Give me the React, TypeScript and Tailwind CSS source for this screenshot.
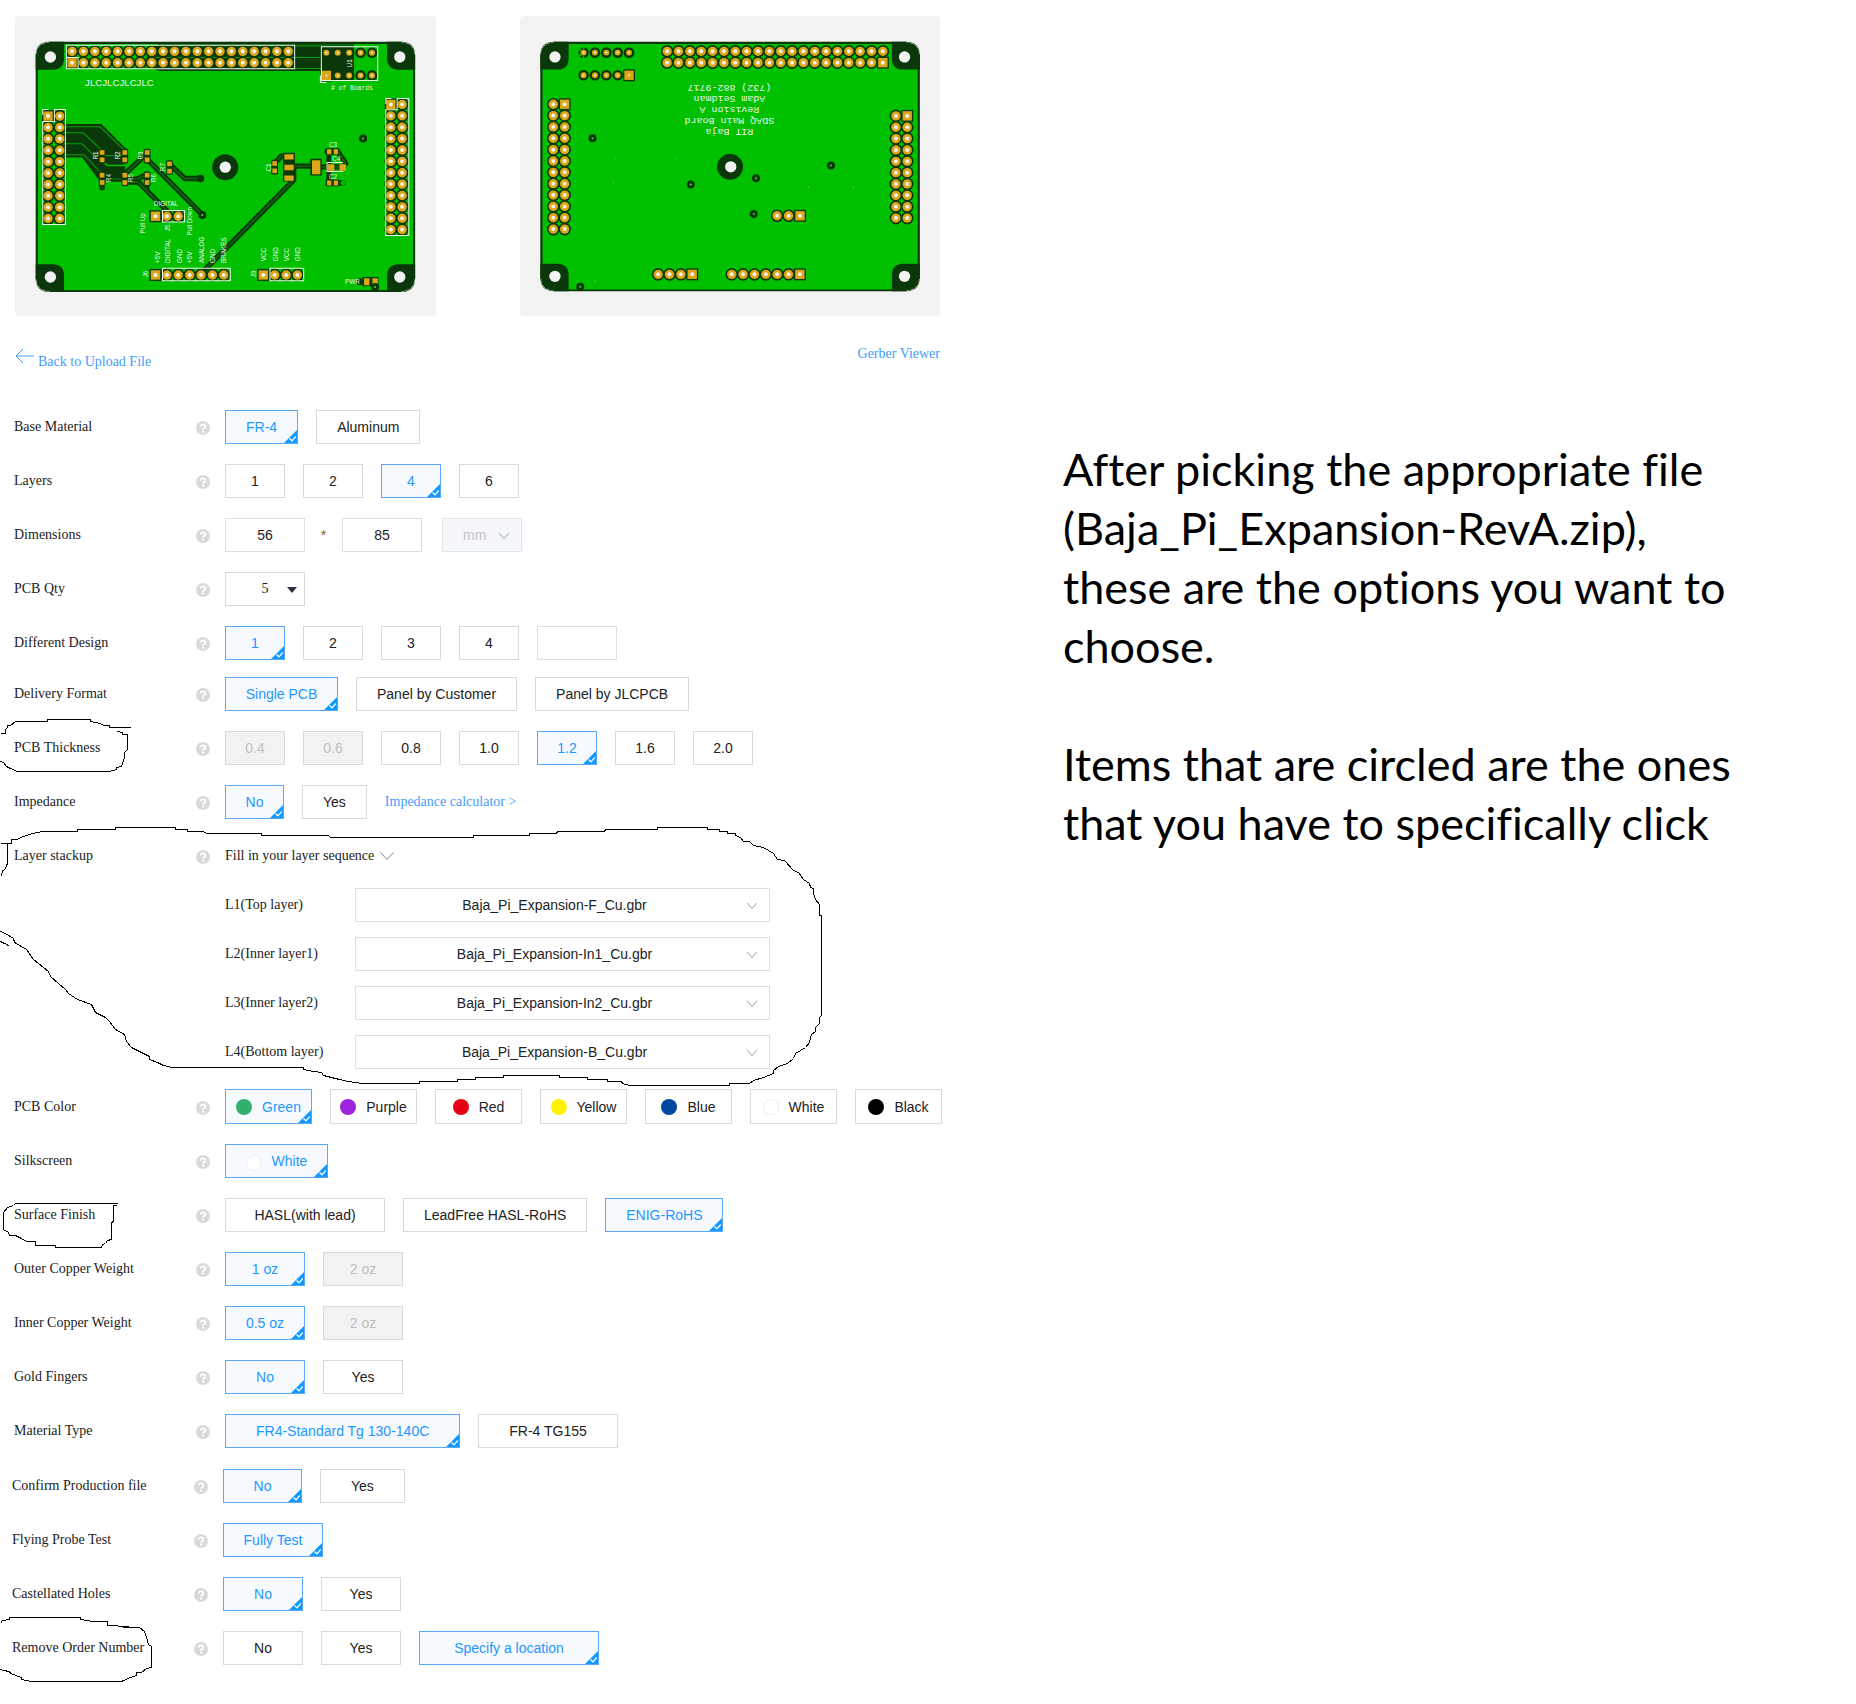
import React from "react";

const DARK = "#0b380b";
const GREEN = "#00c000";
const GOLD = "#dba617";
const HOLE = "#f2f2f2";
const SILK = "#e9f5e9";

type Point = [number, number];

const grid = (x: number, y: number, cols: number, rows: number, dx = 34.1, dy = 34.1): Point[] => {
  const points: Point[] = [];
  for (let r = 0; r < rows; r++) {
    for (let c = 0; c < cols; c++) points.push([x + c * dx, y + r * dy]);
  }
  return points;
};

function Pins({ points, square = -1, small = false }: { points: Point[]; square?: number; small?: boolean }) {
  const outer = small ? 16 : 19;
  const ring = small ? 9 : 14;
  const hole = small ? 3 : 6;
  return (
    <g>
      {points.map(([x, y], i) =>
        i === square ? (
          <rect key={i} x={x - 18} y={y - 18} width={36} height={36} fill={DARK} />
        ) : (
          <circle key={i} cx={x} cy={y} r={outer} fill={DARK} />
        ),
      )}
      {points.map(([x, y], i) => (
        <g key={i}>
          {i === square ? (
            <rect x={x - 14} y={y - 14} width={28} height={28} fill={GOLD} />
          ) : (
            <circle cx={x} cy={y} r={ring} fill={GOLD} />
          )}
          <circle cx={x} cy={y} r={hole} fill={HOLE} />
        </g>
      ))}
    </g>
  );
}

function BoardBody({ x, right }: { x: number; right: number }) {
  const w = right - x;
  return (
    <g>
      <rect x={x} y={125} width={w} height={750} rx={42} fill={DARK} />
      <rect x={x + 6} y={132} width={w - 12} height={738} fill={GREEN} clipPath="inset(0 round 42px)" />
      <path d={`M${x} 209V167q0-42 42-42h43v49q0 35-35 35z`} fill={DARK} />
      <path d={`M${right} 209V167q0-42-42-42h-42v49q0 35 35 35z`} fill={DARK} />
      <path d={`M${x} 792v41q0 42 42 42h43v-48q0-35-35-35z`} fill={DARK} />
      <path d={`M${right} 792v41q0 42-42 42h-42v-48q0-35 35-35z`} fill={DARK} />
      <g fill="none" stroke="#dfe8df" strokeWidth={2} strokeDasharray="14 3">
        <path d={`M${x + 1} 162q2-32 40-36`} />
        <path d={`M${right - 1} 162q-2-32-40-36`} />
        <path d={`M${x + 1} 838q2 32 40 36`} />
        <path d={`M${right - 1} 838q-2 32-40 36`} />
      </g>
      <g fill={HOLE}>
        <circle cx={x + 44} cy={171} r={17} />
        <circle cx={right - 46} cy={171} r={17} />
        <circle cx={x + 44} cy={830} r={17} />
        <circle cx={right - 46} cy={830} r={17} />
      </g>
    </g>
  );
}

function Via({ x, y }: { x: number; y: number }) {
  return (
    <g>
      <circle cx={x} cy={y} r={12} fill={DARK} />
      <circle cx={x} cy={y} r={3} fill="#4fd44f" />
    </g>
  );
}

function Smd({ x, y }: { x: number; y: number }) {
  return (
    <g>
      <rect x={x - 10} y={y - 22} width={20} height={44} rx={4} fill={DARK} />
      <rect x={x - 7} y={y - 18} width={14} height={14} fill={GOLD} />
      <rect x={x - 7} y={y + 4} width={14} height={14} fill={GOLD} />
    </g>
  );
}

function Trace({ d }: { d: string }) {
  return (
    <g fill="none" strokeLinejoin="round" strokeLinecap="round">
      <path d={d} stroke={DARK} strokeWidth={16} />
      <path d={d} stroke="#087008" strokeWidth={4} />
    </g>
  );
}

function Upright({ x, y, size = 19, children }: { x: number; y: number; size?: number; children: string }) {
  return (
    <text transform={`translate(${x} ${y}) rotate(-90)`} fontSize={size}>
      {children}
    </text>
  );
}

function TopBoard() {
  return (
    <svg viewBox="45 48 1260 900" className="block h-auto w-full" role="img" aria-label="Top side of the board">
      <BoardBody x={107} right={1244} />
      <path d="M476 133H1060V213H480L440 200V150z" fill={DARK} />
      <path d="M440 189l10-17H960M480 205H992l20 20M480 138H1052l14 14v60l14 12" fill="none" stroke="#0aa00a" strokeWidth={3} />
      <path d="M190 372H304L378 446V530L300 545L246 472H190z" fill={DARK} />
      <path
        d="M190 380H300L372 450M160 380l20 18H250L304 450M160 415l18 16H246L282 466H372M182 464H252L304 520M326 496h50v24"
        fill="none"
        stroke="#0aa00a"
        strokeWidth={3}
      />
      <path d="M304 480l18 16h52v-20" fill="none" stroke={GREEN} strokeWidth={5} />
      <Trace d="M306 525v38" />
      <Trace d="M440 525v38" />
      <Trace d="M306 537H410L436 525" />
      <Trace d="M376 520L436 464" />
      <Trace d="M440 476L606 643" />
      <Trace d="M376 546H415L500 632V648" />
      <Trace d="M508 492L554 535H601" />
      <Trace d="M614 808L880 540V498H940" />
      <Trace d="M823 490L842 468H866" />
      <Trace d="M980 454H1012L1036 490" />
      <Trace d="M988 548H1028" />
      <Trace d="M940 500H1030" />
      <Trace d="M1124 846v18" />
      <path d="M985 454v90" stroke={DARK} strokeWidth={14} />

      <Pins points={grid(216, 154, 20, 2)} square={20} />
      <Pins points={grid(144, 348, 2, 10, 35)} square={0} />
      <Pins points={grid(1171, 313, 2, 12)} square={0} />
      <Pins points={grid(466, 824, 7, 1)} square={0} />
      <Pins points={grid(789, 824, 4, 1)} square={0} />
      <Pins points={grid(466, 648, 3, 1)} square={0} />
      <path d="M965 142H1060V240H965z" fill={DARK} />
      <Pins points={grid(978, 158, 5, 1, 34.2)} small />
      <Pins points={grid(978, 226, 5, 1, 34.2)} square={0} small />

      {([[306, 468], [374, 468], [441, 468], [306, 536], [374, 536], [441, 536], [508, 502], [823, 501]] as Point[]).map(
        ([x, y]) => (
          <Smd key={`${x}-${y}`} x={x} y={y} />
        ),
      )}
      <path d="M848 458h36v86h-36z" fill={DARK} />
      <g fill={GOLD}>
        <path d="M852 462h28v16h-28zM852 494h28v16h-28zM852 526h28v16h-28z" />
      </g>
      <path d="M930 476h34v50h-34z" fill={DARK} />
      <path d="M935 480h25v42h-25zM982 492h20v20h-20zM1017 492h20v20h-20z" fill={GOLD} />
      <path d="M976 444h40v20h-40zM976 538h40v20h-40z" fill={DARK} />
      <path d="M980 447h13v15h-13zM1000 447h13v15h-13zM980 541h13v15h-13zM1000 541h13v15h-13z" fill={GOLD} />
      <circle cx={1078} cy={844} r={10} fill={DARK} />
      <path d="M1086 830h48v28h-48z" fill={DARK} />
      <path d="M1091 834h16v21h-16zM1116 834h16v21h-16z" fill={GOLD} />

      <circle cx={675} cy={501} r={39} fill={DARK} />
      <circle cx={675} cy={501} r={17} fill={HOLE} />
      <Via x={1088} y={415} />
      <Via x={606} y={644} />
      <circle cx={601} cy={535} r={11} fill={DARK} />
      <circle cx={1028} cy={548} r={7} fill={GREEN} />
      <Via x={1124} y={860} />

      <g fill="none" stroke={SILK} strokeWidth={3}>
        <path d="M199 136H883V206H234V172H199zM199 172V206H234" />
        <path d="M163 328H196V673H128V364H163zM128 345V328H145M128 364H163" />
        <path d="M1190 295H1225V706H1156V329H1190zM1156 312V295H1173" />
        <path d="M963 140H1132V241H963zM960 226V247H978" />
        <path d="M487 804H690V841H487z" />
        <path d="M809 804H910V841H809z" />
        <path d="M487 631H553V665H487z" />
        <path d="M1028 487H980V514H1028" />
      </g>
      <g fill={SILK} className="font-['Liberation_Sans']">
        <text x={255} y={258} fontSize={29}>JLCJLCJLCJLC</text>
        <text x={992} y={269} fontSize={19} className="font-['Liberation_Mono']"># of Boards</text>
        <text x={461} y={616} fontSize={19}>DIGITAL</text>
        <text x={986} y={440} fontSize={19}>C3</text>
        <text x={996} y={483} fontSize={19}>C4</text>
        <text x={986} y={535} fontSize={19}>C2</text>
        <text x={1034} y={851} fontSize={19}>PWR</text>
        <Upright x={1054} y={202}>U1</Upright>
        <Upright x={294} y={478}>R1</Upright>
        <Upright x={361} y={478}>R2</Upright>
        <Upright x={430} y={478}>R3</Upright>
        <Upright x={332} y={546}>R4</Upright>
        <Upright x={400} y={546}>R5</Upright>
        <Upright x={467} y={546}>R6</Upright>
        <Upright x={495} y={513}>R7</Upright>
        <Upright x={811} y={514}>C1</Upright>
        <Upright x={434} y={700}>Pull Up</Upright>
        <Upright x={576} y={706}>Pull Down</Upright>
        <Upright x={508} y={693}>J5</Upright>
        <Upright x={445} y={831}>J6</Upright>
        <Upright x={766} y={831}>J3</Upright>
        <Upright x={478} y={788}>+5V</Upright>
        <Upright x={509} y={788}>DIGITAL</Upright>
        <Upright x={545} y={788}>GND</Upright>
        <Upright x={576} y={788}>+5V</Upright>
        <Upright x={610} y={788}>ANALOG</Upright>
        <Upright x={644} y={788}>GND</Upright>
        <Upright x={678} y={788}>BRAKES</Upright>
        <Upright x={798} y={783}>VCC</Upright>
        <Upright x={832} y={783}>GND</Upright>
        <Upright x={866} y={783}>VCC</Upright>
        <Upright x={900} y={783}>GND</Upright>
      </g>
    </svg>
  );
}

const BOTTOM_TEXT: [string, number][] = [
  ["(732) 882-9717", 255],
  ["Adam Seidman", 288],
  ["Revision A", 321],
  ["SDAQ Main Board", 354],
  ["RIT Baja", 387],
];

function BottomBoard() {
  return (
    <svg viewBox="57 48 1263 900" className="block h-auto w-full" role="img" aria-label="Bottom side of the board">
      <BoardBody x={118} right={1258} />
      <Pins points={grid(499, 154, 20, 2)} square={39} />
      <Pins points={grid(248, 158, 5, 1)} small />
      <path d="M232 148l10 4M232 168l10-4M248 140v8M248 168v8" stroke={GREEN} strokeWidth={5} />
      <Pins points={grid(248, 226, 5, 1)} square={4} small />
      <Pins points={grid(157, 313, 2, 12)} square={1} />
      <Pins points={grid(1186, 348, 2, 10)} square={1} />
      <Pins points={grid(829, 648, 3, 1, 34.6)} square={2} />
      <Pins points={grid(472, 824, 4, 1)} square={3} />
      <Pins points={grid(693, 824, 7, 1)} square={6} />
      <circle cx={688} cy={501} r={39} fill={DARK} />
      <circle cx={690} cy={501} r={17} fill={HOLE} />
      {([[275, 415], [991, 497], [766, 535], [570, 554], [759, 643], [238, 861]] as Point[]).map(([x, y]) => (
        <Via key={x} x={x} y={y} />
      ))}
      <path
        d="M343 476h3M523 475h3M336 547h3M922 562h3M1057 562h3M280 844h3"
        stroke="#8fdc8f"
        strokeWidth={3}
      />
      <g fill={SILK} fontSize={30} className="font-['Liberation_Mono']">
        {BOTTOM_TEXT.map(([line, y]) => (
          <text key={line} transform={`translate(686 ${y}) rotate(180)`} textAnchor="middle">
            {line}
          </text>
        ))}
      </g>
    </svg>
  );
}

function HelpIcon() {
  return (
    <svg viewBox="0 0 14 14" className="mt-0.5 mr-[15px] size-3.5 shrink-0" aria-hidden="true">
      <circle cx="7" cy="7" r="7" fill="#d9d9d9" />
      <path d="M4.700 5.600C4.700 4.200 5.600 3.300 7 3.300s2.300.8 2.300 2.100c0 1.500-2.200 1.600-2.200 3.300" fill="none" stroke="#fff" strokeWidth="1.800" />
      <circle cx="7.100" cy="10.700" r="1.100" fill="#fff" />
    </svg>
  );
}

function Corner() {
  return (
    <svg viewBox="0 0 13 13" className="absolute right-0 bottom-0 size-[13px]" aria-hidden="true">
      <path d="M13 0v13H0z" fill="#1199ff" />
      <path d="M5.500 8.500l2.500 2.300 3.700-4.300" fill="none" stroke="#fff" strokeWidth="1.200" />
    </svg>
  );
}

type OptionProps = {
  children: React.ReactNode;
  on?: boolean;
  off?: boolean;
  className?: string;
};

function Option({ children, on, off, className = "px-5" }: OptionProps) {
  const tone = on
    ? "border-[#58aaf8] bg-[#f6faff] text-[#1e98ff]"
    : off
      ? "border-[#d9d9d9] bg-[#f2f2f2] text-[#bfbfbf]"
      : "border-[#d9d9d9] bg-white text-[#222]";
  return (
    <button
      type="button"
      aria-pressed={!!on}
      disabled={off}
      className={`relative flex h-full shrink-0 items-center justify-center border whitespace-nowrap ${tone} ${className}`}
    >
      {children}
      {on && <Corner />}
    </button>
  );
}

function Row({
  label,
  children,
  className = "mb-5 h-[34px]",
  gap = "gap-[18px]",
}: {
  label: string;
  children: React.ReactNode;
  className?: string;
  gap?: string;
}) {
  return (
    <div role="group" aria-label={label} className={`flex items-center ${className}`}>
      <span className="w-[182px] shrink-0 font-['Liberation_Serif']">{label}</span>
      <HelpIcon />
      <div className={`flex h-full items-center ${gap}`}>{children}</div>
    </div>
  );
}

function Chevron({ className }: { className: string }) {
  return (
    <svg viewBox="0 0 12 8" className={className} fill="none" stroke="currentColor" aria-hidden="true">
      <path d="M1 1l5 5.500L11 1" strokeWidth="1.200" />
    </svg>
  );
}

function Dot({ className }: { className: string }) {
  return <span className={`mr-2.5 size-4 shrink-0 rounded-full ${className}`} />;
}

const NUM = "w-[60px]";
const MID = "w-20";
const COLOR = "w-[87px]";

const LAYERS = [
  ["L1(Top layer)", "Baja_Pi_Expansion-F_Cu.gbr"],
  ["L2(Inner layer1)", "Baja_Pi_Expansion-In1_Cu.gbr"],
  ["L3(Inner layer2)", "Baja_Pi_Expansion-In2_Cu.gbr"],
  ["L4(Bottom layer)", "Baja_Pi_Expansion-B_Cu.gbr"],
];

const COLORS = [
  ["Green", "bg-[#33b06c]"],
  ["Purple", "bg-[#9c24dc]"],
  ["Red", "bg-[#e60012]"],
  ["Yellow", "bg-[#fff100]"],
  ["Blue", "bg-[#00479d]"],
  ["White", "border border-[#eee] bg-white"],
  ["Black", "bg-black"],
];

const FIELD = "h-full w-20 border border-[#dcdfe6] bg-white text-center text-[#222]";

const PEN_STROKES = [
  "0,733 5,733 5,729 7,727 7,725 10,725 15,721 47,721 47,719 90,719 90,721 100,723 103,725 109,725 109,727 130,727",
  "117,731 122,732 122,734 127,734 127,749 124,752 124,757 122,763 121,766 116,767 116,769 109,771 17,771 10,768 6,766 3,762 0,761",
  "0,843 11,843 11,839 17,839 20,837 26,835 32,833 42,831 77,831 77,829 115,829 115,827 175,827 175,829 187,829 187,831 203,831 206,833 261,833 261,835 328,835 330,837 473,837 473,835 529,835 529,833 556,833 557,831 604,831 605,829 657,829 657,827 707,827 707,829 719,829 719,831 727,831 727,833 735,833 735,835 740,837 743,841 749,841 753,845 763,847 773,853 777,859 784,860 793,870 798,872 803,879 809,883 810,887 813,888 813,893 815,899 819,904 819,915 821,915 821,1015 819,1017 819,1023 815,1027 815,1031 811,1034 809,1042 805,1047 795,1053 793,1058 787,1063 778,1066 773,1070 773,1073 763,1077 753,1080 749,1083 729,1083 729,1085 629,1085 622,1083 621,1081 607,1081 607,1079 587,1079 587,1077 559,1077 559,1075 503,1075 503,1077 475,1077 475,1079 457,1079 457,1081 419,1081 419,1083 362,1083 348,1081 339,1079 331,1077 323,1075 321,1072 313,1071 303,1069 303,1067 172,1067 163,1065 157,1062 149,1059 149,1056 141,1052 131,1047 126,1041 124,1034 115,1029 109,1021 105,1017 95,1012 91,1004 77,999 68,993 65,989 50,976 48,971 33,959 26,949 14,942 13,938 5,933 0,931",
  "0,941 4,943 7,944 8,946",
  "7,843 7,863 6,865 5,869 2,870 1,875 0,876",
  "117,1203 15,1203 13,1205 7,1207 3,1212 3,1229 8,1232 9,1235 15,1235 21,1238 26,1241 35,1241 35,1245 55,1245 55,1247 101,1247 102,1244 105,1243 107,1240 111,1239 111,1222 113,1221 113,1205 116,1205",
  "0,1623 2,1620 9,1619 9,1617 80,1617 80,1619 93,1621 107,1621 107,1625 128,1626 123,1627 139,1627 144,1631 146,1637 148,1644 151,1646 151,1667 146,1668 141,1672 136,1672 136,1675 130,1677 121,1681 31,1681 21,1679 21,1677 10,1673 9,1671 3,1670 0,1669",
];

export default function App() {
  return (
    <main className="flex bg-white font-['Liberation_Sans',sans-serif] text-sm text-[#222]">
      <section className="relative basis-[942px]">
        <div className="flex gap-[84px] pt-4 pr-0.5 pl-[15px]">
          <div className="flex-1 overflow-hidden rounded bg-[#f2f2f2]">
            <TopBoard />
          </div>
          <div className="flex-1 overflow-hidden rounded bg-[#f2f2f2]">
            <BottomBoard />
          </div>
        </div>

        <nav className="mt-[29px] mb-[31px] flex items-start justify-between pr-0.5 pl-[15px] font-['Liberation_Serif'] text-[#409eff]">
          <a href="#upload" className="flex items-end gap-1">
            <svg viewBox="0 0 19 34" className="h-[34px] w-[19px]" fill="none" stroke="currentColor" aria-hidden="true">
              <path d="M8 4L1 11l7 7M1 11h18" />
            </svg>
            <span className="leading-[34px]">Back to Upload File</span>
          </a>
          <a href="#viewer" className="leading-[18px]">Gerber Viewer</a>
        </nav>

        <form className="pl-3.5">
          <Row label="Base Material">
            <Option on>FR-4</Option>
            <Option>Aluminum</Option>
          </Row>
          <Row label="Layers">
            <Option className={NUM}>1</Option>
            <Option className={NUM}>2</Option>
            <Option className={NUM} on>4</Option>
            <Option className={NUM}>6</Option>
          </Row>
          <Row label="Dimensions" gap="gap-0">
            <input aria-label="Width" defaultValue="56" className={FIELD} />
            <span className="w-[37px] text-center text-[#8a5a2b]">*</span>
            <input aria-label="Height" defaultValue="85" className={FIELD} />
            <span className="relative ml-5 h-full text-[#c0c4cc]">
              <select
                aria-label="Unit"
                disabled
                className="h-full w-20 appearance-none border border-[#e4e7ed] bg-[#f5f7fa] pl-5 opacity-100"
              >
                <option>mm</option>
              </select>
              <Chevron className="absolute top-[14px] right-3 h-2 w-3" />
            </span>
          </Row>
          <Row label="PCB Qty">
            <span className="relative h-full">
              <select
                aria-label="PCB Qty"
                className="h-full w-20 appearance-none border border-[#d9d9d9] bg-white text-center font-['Liberation_Serif'] text-[#222]"
              >
                <option>5</option>
              </select>
              <svg viewBox="0 0 10 6" className="pointer-events-none absolute top-[15px] right-2 h-1.5 w-2.5" aria-hidden="true">
                <path d="M0 0h10L5 6z" fill="#2c2f45" />
              </svg>
            </span>
          </Row>
          <Row label="Different Design" className="mb-[17px] h-[34px]">
            <Option className={NUM} on>1</Option>
            <Option className={NUM}>2</Option>
            <Option className={NUM}>3</Option>
            <Option className={NUM}>4</Option>
            <input aria-label="Other number of designs" className={FIELD} />
          </Row>
          <Row label="Delivery Format">
            <Option className="w-[113px]" on>Single PCB</Option>
            <Option>Panel by Customer</Option>
            <Option>Panel by JLCPCB</Option>
          </Row>
          <Row label="PCB Thickness">
            <Option className={NUM} off>0.4</Option>
            <Option className={NUM} off>0.6</Option>
            <Option className={NUM}>0.8</Option>
            <Option className={NUM}>1.0</Option>
            <Option className={NUM} on>1.2</Option>
            <Option className={NUM}>1.6</Option>
            <Option className={NUM}>2.0</Option>
          </Row>
          <Row label="Impedance">
            <Option className="w-[59px]" on>No</Option>
            <Option>Yes</Option>
            <a href="#impedance" className="font-['Liberation_Serif'] text-[#409eff]">Impedance calculator &gt;</a>
          </Row>
          <Row label="Layer stackup" className="mb-[15px] h-[34px]">
            <button type="button" className="flex items-center gap-1.5 font-['Liberation_Serif']">
              Fill in your layer sequence
              <svg viewBox="0 0 14 8" className="h-2 w-3.5" fill="none" stroke="#707680" aria-hidden="true">
                <path d="M.5.5L7 7.500L13.500.5" strokeWidth=".9" />
              </svg>
            </button>
          </Row>
          <div className="mb-5 ml-[211px] flex flex-col gap-[15px]">
            {LAYERS.map(([name, file]) => (
              <label key={name} className="flex h-[34px] items-center">
                <span className="w-[130px] font-['Liberation_Serif']">{name}</span>
                <span className="relative h-full w-[415px]">
                  <select className="h-full w-full appearance-none border border-[#dcdfe6] bg-white pr-4 text-center text-[#222]">
                    <option>{file}</option>
                  </select>
                  <Chevron className="pointer-events-none absolute top-[14px] right-3 h-2 w-3 text-[#c0c4cc]" />
                </span>
              </label>
            ))}
          </div>
          <Row label="PCB Color" className="mb-5 h-[35px]">
            {COLORS.map(([name, dot], i) => (
              <Option key={name} className={COLOR} on={i === 0}>
                <Dot className={dot} />
                {name}
              </Option>
            ))}
          </Row>
          <Row label="Silkscreen">
            <Option className="w-[103px]" on>
              <Dot className="mt-1 border border-[#eee] bg-white" />
              White
            </Option>
          </Row>
          <Row label="Surface Finish">
            <Option className="w-40">HASL(with lead)</Option>
            <Option>LeadFree HASL-RoHS</Option>
            <Option className="w-[118px]" on>ENIG-RoHS</Option>
          </Row>
          <Row label="Outer Copper Weight">
            <Option className={MID} on>1 oz</Option>
            <Option className={MID} off>2 oz</Option>
          </Row>
          <Row label="Inner Copper Weight">
            <Option className={MID} on>0.5 oz</Option>
            <Option className={MID} off>2 oz</Option>
          </Row>
          <Row label="Gold Fingers">
            <Option className={MID} on>No</Option>
            <Option className={MID}>Yes</Option>
          </Row>
          <Row label="Material Type" className="mb-[21px] h-[34px]">
            <Option className="px-[30px]" on>FR4-Standard Tg 130-140C</Option>
            <Option className="px-[30px]">FR-4 TG155</Option>
          </Row>
          <div className="-ml-0.5">
            <Row label="Confirm Production file">
              <Option className="w-[79px]" on>No</Option>
              <Option className="px-[30px]">Yes</Option>
            </Row>
            <Row label="Flying Probe Test">
              <Option className="w-[100px]" on>Fully Test</Option>
            </Row>
            <Row label="Castellated Holes">
              <Option className={MID} on>No</Option>
              <Option className={MID}>Yes</Option>
            </Row>
            <Row label="Remove Order Number">
              <Option className={MID}>No</Option>
              <Option className={MID}>Yes</Option>
              <Option className="w-[180px]" on>Specify a location</Option>
            </Row>
          </div>
        </form>

        <svg
          viewBox="0 0 942 1704"
          className="pointer-events-none absolute top-0 left-0 h-[1704px] w-[942px]"
          shapeRendering="crispEdges"
          fill="none"
          stroke="#000"
          aria-hidden="true"
        >
          {PEN_STROKES.map((points) => (
            <polyline key={points} points={points} transform="translate(.5 .5)" />
          ))}
        </svg>
      </section>

      <aside className="mt-[440px] ml-[121px] max-w-[684px] flex-1 font-['Lato',sans-serif] text-[45px] leading-[59px] text-black [font-variant-ligatures:none]">
        <p>
          After picking the appropriate file (Baja_Pi_Expansion-RevA.zip), these are the options you want to choose.
        </p>
        <p className="mt-[59px]">Items that are circled are the ones that you have to specifically click</p>
      </aside>
    </main>
  );
}
